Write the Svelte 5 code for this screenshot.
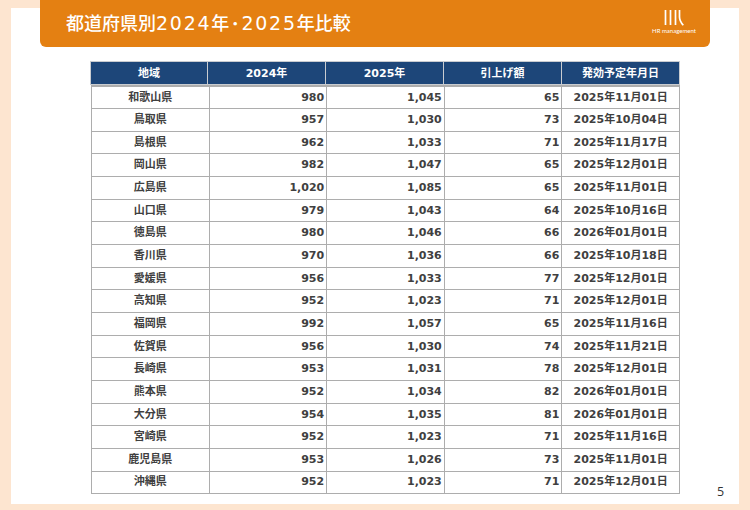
<script>
  const rows = [
    ['和歌山県','980','1,045','65','2025年11月01日'],
    ['鳥取県','957','1,030','73','2025年10月04日'],
    ['島根県','962','1,033','71','2025年11月17日'],
    ['岡山県','982','1,047','65','2025年12月01日'],
    ['広島県','1,020','1,085','65','2025年11月01日'],
    ['山口県','979','1,043','64','2025年10月16日'],
    ['徳島県','980','1,046','66','2026年01月01日'],
    ['香川県','970','1,036','66','2025年10月18日'],
    ['愛媛県','956','1,033','77','2025年12月01日'],
    ['高知県','952','1,023','71','2025年12月01日'],
    ['福岡県','992','1,057','65','2025年11月16日'],
    ['佐賀県','956','1,030','74','2025年11月21日'],
    ['長崎県','953','1,031','78','2025年12月01日'],
    ['熊本県','952','1,034','82','2026年01月01日'],
    ['大分県','954','1,035','81','2026年01月01日'],
    ['宮崎県','952','1,023','71','2025年11月16日'],
    ['鹿児島県','953','1,026','73','2025年11月01日'],
    ['沖縄県','952','1,023','71','2025年12月01日'],
  ];
  const heads = ['地域','2024年','2025年','引上げ額','発効予定年月日'];
</script>

<div class="page">
  <div class="sheet">
    <header class="banner">
      <h1>都道府県別<span class="num">2024</span>年<span class="dot">・</span><span class="num">2025</span>年比較</h1>
      <div class="logo">
        <svg width="20" height="16" viewBox="0 0 20 16" aria-hidden="true">
          <path d="M1.5 0V15M6.5 0V15M11.5 0V15" stroke="#fff" stroke-width="1.7" fill="none"/>
          <path d="M15.5 0V7Q15.5 11 19.3 15.3" stroke="#fff" stroke-width="1.7" fill="none"/>
        </svg>
        <span class="brand">HR management</span>
      </div>
    </header>
    <div class="tables">
      <div class="head">
        {#each heads as h}<div class="hcell">{h}</div>{/each}
      </div>
      <table>
        <tbody>
          {#each rows as r}
            <tr>
              <td class="c">{r[0]}</td>
              <td class="r">{r[1]}</td>
              <td class="r">{r[2]}</td>
              <td class="r">{r[3]}</td>
              <td class="c">{r[4]}</td>
            </tr>
          {/each}
        </tbody>
      </table>
    </div>
    <div class="pageno">5</div>
  </div>
</div>

<style>
  :global(body) { margin: 0; background: #fde5d0; }
  .page { width: 750px; height: 510px; overflow: hidden; padding: 8px 11px 6px; box-sizing: border-box; }
  .sheet { width: 728px; height: 496px; background: #fff; position: relative; display: flow-root; }
  .banner {
    margin: -8px 29px 0;
    height: 47px;
    background: #e48012;
    border-radius: 0 0 6px 6px;
    display: flex;
    justify-content: space-between;
    padding: 0 14px 0 26px;
    box-sizing: border-box;
    color: #fff;
  }
  h1 {
    margin: 0;
    font: 500 18px/44px "Noto Sans CJK JP", sans-serif;
  }
  .num { font-family: "DejaVu Sans", sans-serif; font-size: 19px; letter-spacing: 1.75px; }
  .dot { font-size: 12px; font-weight: 900; vertical-align: 1px; }
  .logo { display: flex; flex-direction: column; align-items: center; padding-top: 10px; }
  .brand { font: 400 6px/8px "Lato", sans-serif; margin-top: 1px; white-space: nowrap; }
  .tables { margin: 14px 60px 0 79px; font-family: "DejaVu Sans", "Noto Sans CJK JP", sans-serif; font-weight: 700; font-size: 11px; }
  .head {
    display: grid;
    grid-template-columns: repeat(5, 118px);
    width: 590px;
    height: 24px;
    background: #1d4679;
    color: #fff;
  }
  .hcell {
    display: flex; align-items: center; justify-content: center;
    border: 1px solid #c9ccd0;
    border-left-width: 0;
    padding-bottom: 2px;
    box-sizing: border-box;
  }
  .hcell:first-child { border-left-width: 1px; }
  table { border-collapse: collapse; table-layout: fixed; width: 588px; margin-left: 1px; color: #404040; }
  td { border: 1px solid #adadad; height: 22.67px; padding: 0 2px; box-sizing: border-box; width: 117.6px; line-height: 14px; }
  tr:first-child td { border-top-width: 2px; }
  .c { text-align: center; }
  .r { text-align: right; }
  .pageno { position: absolute; left: 706px; top: 476px; font: 400 12.5px/16px "Open Sans", sans-serif; color: #333; }
</style>
